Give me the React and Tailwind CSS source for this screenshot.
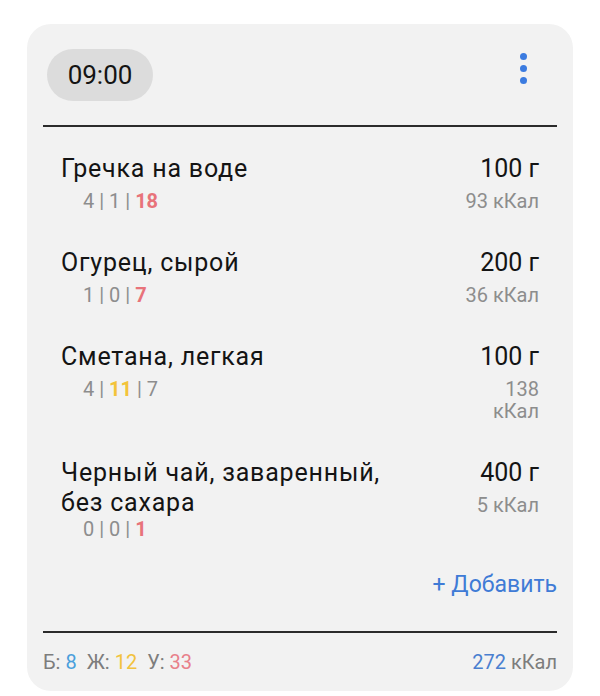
import React from 'react';

// Meal card: time header, list of foods, totals footer
const foods = [
    { name: 'Гречка на воде', weight: '100 г', kcal: '93 кКал', macros: ['4', '1', '18'], hi: 2, hiColor: 'text-[#e8737a]' },
    { name: 'Огурец, сырой', weight: '200 г', kcal: '36 кКал', macros: ['1', '0', '7'], hi: 2, hiColor: 'text-[#e8737a]' },
    { name: 'Сметана, легкая', weight: '100 г', kcal: '138 кКал', macros: ['4', '11', '7'], hi: 1, hiColor: 'text-[#f3c33a]' },
    { name: 'Черный чай, заваренный, без сахара', weight: '400 г', kcal: '5 кКал', macros: ['0', '0', '1'], hi: 2, hiColor: 'text-[#e8737a]' },
];

const FoodRow = ({ food }) => (
    <div className="flex items-start justify-between">
        <div className="w-[335px]">
            <div className="min-h-[36px] text-[25px] leading-[30px] tracking-[0.8px] text-[#141414]">{food.name}</div>
            <div className="ml-[22px] text-[20px] leading-[22px] text-[#8d8d8d]">
                {food.macros.map((m, i) => (
                    <React.Fragment key={i}>
                        {i > 0 && <span> | </span>}
                        <span className={i === food.hi ? `font-bold ${food.hiColor}` : ''}>{m}</span>
                    </React.Fragment>
                ))}
            </div>
        </div>
        <div className="w-[78px] text-right">
            <div className="text-[25px] leading-[30px] text-[#141414] whitespace-nowrap">{food.weight}</div>
            <div className="mt-[6px] text-[20px] leading-[22px] text-[#8d8d8d]">{food.kcal}</div>
        </div>
    </div>
);

export default function App() {
    return (
        <div className="min-h-[696px] bg-white pt-[24px] font-['Roboto',sans-serif]">
            <div className="mx-[27px] w-[546px] rounded-[24px] bg-[#f2f2f2] px-[16px] pt-[25px] pb-[17px]">
                {/* Header */}
                <div className="flex items-start justify-between pl-[4px] pr-[30px]">
                    <div className="flex h-[52px] w-[106px] items-center justify-center rounded-full bg-[#dcdcdc] text-[26px] text-[#141414]">
                        09:00
                    </div>
                    <div className="mt-[4px] flex flex-col gap-[5px]">
                        <span className="h-[7px] w-[7px] rounded-full bg-[#3b7be0]" />
                        <span className="h-[7px] w-[7px] rounded-full bg-[#3b7be0]" />
                        <span className="h-[7px] w-[7px] rounded-full bg-[#3b7be0]" />
                    </div>
                </div>

                <div className="mt-[24px] h-[2px] bg-[#2b2b2b]" />

                {/* Foods */}
                <div className="flex flex-col gap-[36px] px-[18px] pt-[27px]">
                    {foods.map((f) => (
                        <FoodRow key={f.name} food={f} />
                    ))}
                </div>

                <div className="mt-[30px] text-right text-[23px] leading-[30px] text-[#3f7bd6]">+ Добавить</div>

                <div className="mt-[31px] h-[2px] bg-[#2b2b2b]" />

                {/* Totals */}
                <div className="mt-[17px] flex items-center justify-between text-[20px] leading-[24px] text-[#7d7d7d]">
                    <div>
                        Б: <span className="text-[#4a9fdc]">8</span>
                        <span className="ml-[10px]">Ж: </span><span className="text-[#f2c23e]">12</span>
                        <span className="ml-[10px]">У: </span><span className="text-[#e8808a]">33</span>
                    </div>
                    <div>
                        <span className="text-[#4a7fd0]">272</span> кКал
                    </div>
                </div>
            </div>
        </div>
    );
}
